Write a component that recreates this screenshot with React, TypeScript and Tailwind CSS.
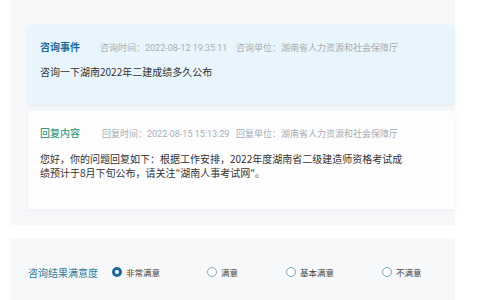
import React, { useState } from 'react';

const FONT = { fontFamily: '"Noto Sans CJK SC", "Noto Sans", sans-serif' };
const META = { fontFamily: 'Roboto, "Noto Sans CJK SC", sans-serif' };

const options = ['非常满意', '满意', '基本满意', '不满意'];

export default function App() {
  const [choice, setChoice] = useState('非常满意');

  return (
    <div className="w-[480px] h-[300px] bg-white overflow-hidden" style={FONT}>
      {/* 咨询 + 回复 */}
      <div className="ml-[10px] w-[445px] h-[225px] bg-[#f7f8fa] pt-[25px] pl-[18px]">
        <div className="h-[79px] bg-[#e9f5fd] pl-[12px] pt-[14px] shadow-[0_2px_4px_rgba(200,215,230,0.35)]">
          <div className="flex items-baseline">
            <span className="w-[60px] text-[10px] font-bold text-[#1b6a98] leading-[16px]">咨询事件</span>
            <span className="w-[136px] text-[9px] text-[#a7aeb6]" style={META}>咨询时间：2022-08-12 19:35:11</span>
            <span className="text-[9px] text-[#a7aeb6]" style={META}>咨询单位：湖南省人力资源和社会保障厅</span>
          </div>
          <p className="mt-[9px] text-[10px] text-[#333] leading-[14px]">咨询一下湖南2022年二建成绩多久公布</p>
        </div>

        <div className="mt-[7px] h-[98px] bg-[#fdfdfe] pl-[12px] pt-[14px] shadow-[0_1px_4px_rgba(220,225,235,0.5)]">
          <div className="flex items-baseline">
            <span className="w-[62px] text-[10px] font-medium text-[#3a9f8c] leading-[16px]">回复内容</span>
            <span className="w-[134px] text-[9px] text-[#a7aeb6]" style={META}>回复时间：2022-08-15 15:13:29</span>
            <span className="text-[9px] text-[#a7aeb6]" style={META}>回复单位：湖南省人力资源和社会保障厅</span>
          </div>
          <p className="mt-[10px] w-[368px] text-[10px] text-[#333] leading-[14px]">
            您好，你的问题回复如下：根据工作安排，2022年度湖南省二级建造师资格考试成绩预计于8月下旬公布，请关注"湖南人事考试网"。
          </p>
        </div>
      </div>

      {/* 满意度 */}
      <div className="mt-[13px] ml-[10px] w-[445px] h-[62px] bg-[#f7f8fa] flex items-center pl-[18px] pt-[6px]">
        <span className="w-[84px] text-[10px] text-[#2a7d9c]">咨询结果满意度</span>
        <div className="flex items-center">
          {options.map((o, i) => (
            <button
              key={o}
              onClick={() => setChoice(o)}
              className={`flex items-center gap-[4px] ${['w-[95px]', 'w-[79px]', 'w-[96px]', 'w-[70px]'][i]}`}
            >
              {choice === o ? (
                <span className="w-[10px] h-[10px] rounded-full bg-[#1b6a98] flex items-center justify-center">
                  <span className="w-[4px] h-[4px] rounded-full bg-white" />
                </span>
              ) : (
                <span className="w-[10px] h-[10px] rounded-full border border-[#7fa9b9] bg-white" />
              )}
              <span className="text-[8.5px] text-[#444]">{o}</span>
            </button>
          ))}
        </div>
      </div>
    </div>
  );
}
